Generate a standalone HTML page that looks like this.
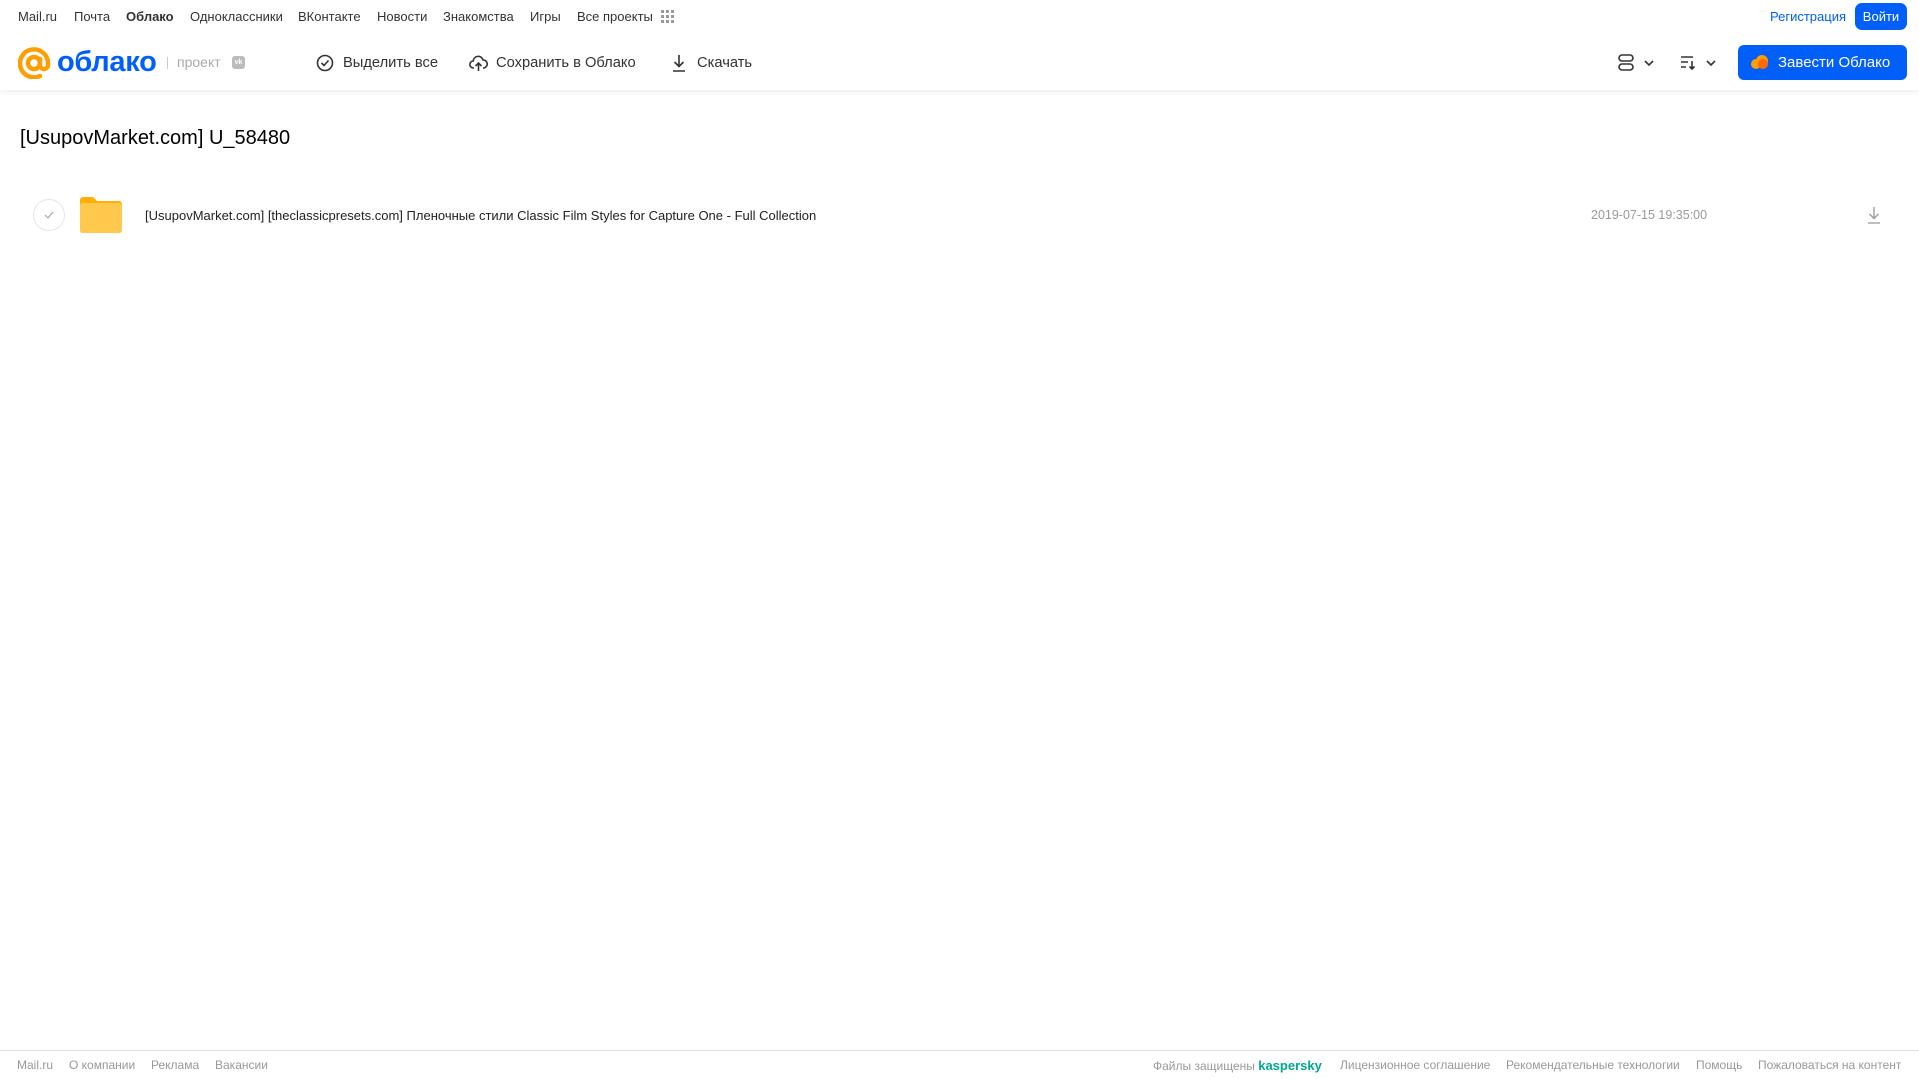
<!DOCTYPE html>
<html><head><meta charset="utf-8"><style>
*{margin:0;padding:0;box-sizing:border-box}
body{width:1919px;height:1079px;background:#fff;font-family:"Liberation Sans",sans-serif;position:relative;overflow:hidden;color:#333}
.a{position:absolute;white-space:nowrap}
.top{font-size:13px;color:#333;top:9px}
.hdr{position:absolute;left:0;top:0;width:1919px;height:90px;box-shadow:0 2px 6px rgba(0,0,0,.07)}
.tb{font-size:14.7px;color:#333;top:55px}
.ft{font-size:12px;color:#999;top:1058px}
</style></head><body>
<div class="hdr"></div>
<div class="a top" style="left:18px">Mail.ru</div>
<div class="a top" style="left:74px">Почта</div>
<div class="a top" style="left:126px;font-weight:bold">Облако</div>
<div class="a top" style="left:190px">Одноклассники</div>
<div class="a top" style="left:298px">ВКонтакте</div>
<div class="a top" style="left:377px">Новости</div>
<div class="a top" style="left:443px">Знакомства</div>
<div class="a top" style="left:530px">Игры</div>
<div class="a top" style="left:577px">Все проекты</div>
<svg class="a" style="left:661px;top:10px" width="14" height="14" fill="#999"><g><rect x="0" y="0" width="3" height="3"/><rect x="5" y="0" width="3" height="3"/><rect x="10" y="0" width="3" height="3"/><rect x="0" y="5" width="3" height="3"/><rect x="5" y="5" width="3" height="3"/><rect x="10" y="5" width="3" height="3"/><rect x="0" y="10" width="3" height="3"/><rect x="5" y="10" width="3" height="3"/><rect x="10" y="10" width="3" height="3"/></g></svg>
<div class="a" style="left:1770px;top:9px;font-size:13px;color:#005ff9">Регистрация</div>
<div class="a" style="left:1855px;top:3px;width:52px;height:27px;background:#005ff9;border-radius:7px;color:#fff;font-size:13px;text-align:center;line-height:27px">Войти</div>

<svg class="a" style="left:18px;top:47px" width="33" height="32" fill="none" stroke="#ff9e00" stroke-width="4.5" stroke-linecap="round"><circle cx="16" cy="16" r="6"/><path d="M22 12v6a4 4 0 0 0 8 0v-2A14 14 0 1 0 22 29"/></svg>
<div class="a" style="left:57px;top:41px;font-size:29px;font-weight:bold;color:#005ff9;line-height:42px;letter-spacing:-0.3px">облако</div>
<div class="a" style="left:167px;top:57px;width:1px;height:12px;background:#ccc"></div>
<div class="a" style="left:177px;top:54px;font-size:14px;color:#aaa">проект</div>
<div class="a" style="left:232px;top:56px;width:13px;height:13px;background:#bbb;border-radius:3px;color:#fff;font-size:7px;font-weight:bold;text-align:center;line-height:13px">vk</div>

<svg class="a" style="left:316px;top:54px" width="18" height="18" fill="none" stroke="#333" stroke-width="1.6"><circle cx="9" cy="9" r="7.5"/><path d="M5.5 9l2.5 2.5 4.5-5"/></svg>
<div class="a tb" style="left:343px">Выделить все</div>
<svg class="a" style="left:469px;top:54px" width="19" height="18" fill="none" stroke="#333" stroke-width="1.6"><path d="M5 14H4.5a3.5 3.5 0 0 1-.3-7A5 5 0 0 1 14 6a3.5 3.5 0 0 1 .5 8H14"/><path d="M9.5 17V9M6.5 12l3-3 3 3"/></svg>
<div class="a tb" style="left:496px">Сохранить в Облако</div>
<svg class="a" style="left:671px;top:54px" width="16" height="18" fill="none" stroke="#333" stroke-width="1.6"><path d="M8 1v11M3.5 8l4.5 4.5L12.5 8M2 17h12"/></svg>
<div class="a tb" style="left:697px">Скачать</div>

<svg class="a" style="left:1618px;top:54px" width="40" height="18" fill="none" stroke="#333" stroke-width="1.6"><rect x="1" y="1" width="14" height="6" rx="3"/><rect x="1" y="10" width="14" height="6" rx="3"/><path d="M27 7l4 4 4-4"/></svg>
<svg class="a" style="left:1680px;top:54px" width="40" height="18" fill="none" stroke="#333" stroke-width="1.6"><path d="M1 3h12M1 8h7M1 13h5M12 7v8M9.5 12.5l2.5 2.5 2.5-2.5"/><path d="M27 7l4 4 4-4"/></svg>
<div class="a" style="left:1738px;top:45px;width:169px;height:35px;background:#005ff9;border-radius:6px;color:#fff;font-size:15px;line-height:35px;padding-left:40px">Завести Облако</div>
<svg class="a" style="left:1750px;top:53px" width="20" height="18"><circle cx="12" cy="8" r="6" fill="#ff9e00"/><circle cx="6" cy="11" r="5" fill="#ff9e00"/><circle cx="13" cy="11" r="5" fill="#ff6a00"/></svg>

<div class="a" style="left:20px;top:127px;font-size:20px;color:#000">[UsupovMarket.com] U_58480</div>

<div class="a" style="left:33px;top:199px;width:32px;height:32px;border:1px solid #e5e5e5;border-radius:50%"></div>
<svg class="a" style="left:44px;top:210px" width="10" height="10" fill="none" stroke="#aaa" stroke-width="1.2"><path d="M1 5l3 3 5-6"/></svg>
<svg class="a" style="left:80px;top:197px" width="42" height="36"><path d="M0 3a3 3 0 0 1 3-3h10l4 4h22a3 3 0 0 1 3 3v26a3 3 0 0 1-3 3H3a3 3 0 0 1-3-3z" fill="#ffb000"/><path d="M0 9a3 3 0 0 1 3-3h36a3 3 0 0 1 3 3v24a3 3 0 0 1-3 3H3a3 3 0 0 1-3-3z" fill="#ffc94d"/></svg>
<div class="a" style="left:145px;top:208px;font-size:13px;color:#222">[UsupovMarket.com] [theclassicpresets.com] Пленочные стили Classic Film Styles for Capture One - Full Collection</div>
<div class="a" style="left:1591px;top:208px;font-size:12.5px;color:#999">2019-07-15 19:35:00</div>
<svg class="a" style="left:1866px;top:206px" width="16" height="18" fill="none" stroke="#999" stroke-width="1.3"><path d="M8 1v11M3.5 8l4.5 4.5L12.5 8M2 17h12"/></svg>

<div class="a" style="left:0;top:1050px;width:1919px;height:1px;background:#e0e0e0"></div>
<div class="a ft" style="left:17px">Mail.ru</div>
<div class="a ft" style="left:69px">О компании</div>
<div class="a ft" style="left:151px">Реклама</div>
<div class="a ft" style="left:215px">Вакансии</div>
<div class="a ft" style="left:1153px">Файлы защищены <b style="color:#00a88e;font-size:13px">kaspersky</b></div>
<div class="a ft" style="left:1340px">Лицензионное соглашение</div>
<div class="a ft" style="left:1506px">Рекомендательные технологии</div>
<div class="a ft" style="left:1696px">Помощь</div>
<div class="a ft" style="left:1758px">Пожаловаться на контент</div>
</body></html>
